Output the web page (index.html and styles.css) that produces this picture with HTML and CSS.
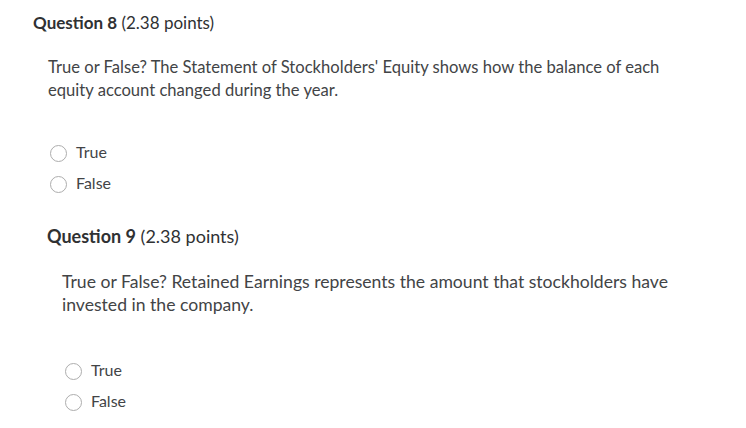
FILE: index.html
```html
<!DOCTYPE html>
<html>
<head>
<meta charset="utf-8">
<link rel="stylesheet" href="styles.css">
</head>
<body>
<section class="question q8">
  <h2 class="q-title"><strong>Question 8</strong> (2.38 points)</h2>
  <p class="q-text">True or False? The Statement of Stockholders' Equity shows how the balance of each equity account changed during the year.</p>
  <div class="options">
    <label class="option"><span class="radio"></span>True</label>
    <label class="option"><span class="radio"></span>False</label>
  </div>
</section>
<section class="question q9">
  <h2 class="q-title"><strong>Question 9</strong> (2.38 points)</h2>
  <p class="q-text">True or False? Retained Earnings represents the amount that stockholders have invested in the company.</p>
  <div class="options">
    <label class="option"><span class="radio"></span>True</label>
    <label class="option"><span class="radio"></span>False</label>
  </div>
</section>
</body>
</html>
```
FILE: styles.css
```css
html, body {
  margin: 0;
  padding: 0;
  background: #ffffff;
}
body {
  font-family: Lato, "Open Sans", sans-serif;
  color: #424446;
  width: 746px;
  height: 428px;
  overflow: hidden;
}
.question {
  display: flex;
  flex-direction: column;
  align-items: flex-start;
}
.q-title {
  margin: 0;
  font-size: 17px;
  line-height: 22px;
  font-weight: 400;
  color: #2f3133;
}
.q-title strong {
  font-weight: 700;
}
.q-text {
  margin: 22px 0 0 15px;
  font-size: 16.6px;
  line-height: 23px;
  max-width: 630px;
}
.options {
  display: flex;
  flex-direction: column;
  margin-left: 17px;
}
.option {
  display: block;
  font-size: 16px;
  line-height: 31px;
  color: #424446;
}
.radio {
  display: inline-block;
  width: 15px;
  height: 15px;
  border: 1px solid #adadad;
  border-radius: 50%;
  vertical-align: middle;
  margin-right: 9px;
  box-sizing: content-box;
}
.q8 {
  padding: 12px 0 0 33px;
}
.q8 .options {
  margin-top: 34px;
}
.q9 {
  padding: 27px 0 0 47px;
}
.q9 .q-title {
  font-size: 18px;
}
.q9 .q-text {
  margin-top: 23px;
  font-size: 17.6px;
  max-width: 630px;
}
.q9 .options {
  margin-top: 38px;
  margin-left: 18px;
}
```
